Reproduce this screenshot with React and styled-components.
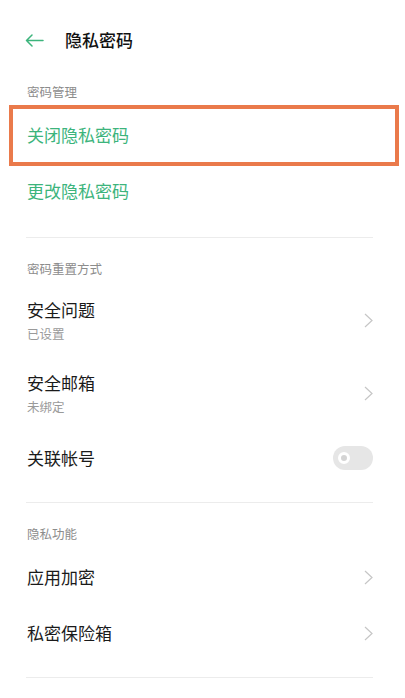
import styled, { createGlobalStyle } from 'styled-components'

const GlobalStyle = createGlobalStyle`
  html, body {
    margin: 0;
    padding: 0;
    background: #fff;
  }
  body {
    font-family: 'Noto Sans CJK SC', 'Noto Sans', sans-serif;
    -webkit-font-smoothing: antialiased;
  }
`

const GREEN = '#3cb47c'

const Page = styled.div`
  width: 405px;
  min-height: 698px;
  background: #fff;
`

const Header = styled.header`
  box-sizing: border-box;
  height: 61px;
  padding: 19px 0 0 25px;
  display: flex;
  align-items: center;
  gap: 21px;
`

const BackButton = styled.button`
  border: none;
  background: none;
  padding: 0;
  display: flex;
  align-items: center;
  cursor: pointer;
`

const Title = styled.h1`
  margin: 0;
  font-size: 17px;
  font-weight: 500;
  color: #111;
  line-height: 24px;
`

const SectionTitle = styled.div`
  box-sizing: border-box;
  height: 46px;
  padding: 18px 27px 0;
  font-size: 12.5px;
  line-height: 26px;
  color: #8c8c8c;
`

const Row = styled.div`
  position: relative;
  box-sizing: border-box;
  height: ${(p) => (p.$tall ? 73 : 56)}px;
  padding: 0 32px 0 27px;
  display: flex;
  align-items: center;
  justify-content: space-between;

  ${(p) =>
    p.$marked &&
    `
    &::after {
      content: '';
      position: absolute;
      top: -2px;
      bottom: -3px;
      left: 9px;
      right: 6px;
      border: 4px solid #ea7a4b;
      pointer-events: none;
    }
  `}
`

const Texts = styled.div`
  display: flex;
  flex-direction: column;
  gap: 2px;
`

const Label = styled.span`
  font-size: 17px;
  line-height: 24px;
  color: ${(p) => (p.$action ? GREEN : '#1a1a1a')};
`

const Sub = styled.span`
  font-size: 12.5px;
  line-height: 20px;
  color: #9a9a9a;
`

const Divider = styled.hr`
  margin: ${(p) => p.$gap || 16}px 32px 0 26px;
  border: none;
  border-top: 1px solid #ececec;
`

const Toggle = styled.div`
  box-sizing: border-box;
  width: 40px;
  height: 24px;
  border-radius: 12px;
  background: #e6e6e6;
  display: flex;
  align-items: center;
  padding-left: 5px;
`

const Knob = styled.span`
  box-sizing: border-box;
  width: 12px;
  height: 12px;
  border-radius: 50%;
  background: #d4d4d4;
  border: 3px solid #fff;
`

function BackArrow() {
  return (
    <svg width="19" height="13" viewBox="0 0 19 13" fill="none">
      <path
        d="M18 6.5H1.5M7 1L1.5 6.5 7 12"
        stroke={GREEN}
        strokeWidth="1.5"
        strokeLinecap="round"
        strokeLinejoin="round"
      />
    </svg>
  )
}

function Chevron() {
  return (
    <svg width="9" height="15" viewBox="0 0 9 15" fill="none">
      <path d="M1 1l7 6.5L1 14" stroke="#c6c6c6" strokeWidth="1.2" />
    </svg>
  )
}

function App() {
  return (
    <Page>
      <GlobalStyle />
      <Header>
        <BackButton aria-label="返回">
          <BackArrow />
        </BackButton>
        <Title>隐私密码</Title>
      </Header>

      <SectionTitle>密码管理</SectionTitle>
      <Row $marked>
        <Label $action>关闭隐私密码</Label>
      </Row>
      <Row>
        <Label $action>更改隐私密码</Label>
      </Row>
      <Divider $gap={18} />

      <SectionTitle>密码重置方式</SectionTitle>
      <Row $tall>
        <Texts>
          <Label>安全问题</Label>
          <Sub>已设置</Sub>
        </Texts>
        <Chevron />
      </Row>
      <Row $tall>
        <Texts>
          <Label>安全邮箱</Label>
          <Sub>未绑定</Sub>
        </Texts>
        <Chevron />
      </Row>
      <Row>
        <Label>关联帐号</Label>
        <Toggle>
          <Knob />
        </Toggle>
      </Row>
      <Divider />

      <SectionTitle>隐私功能</SectionTitle>
      <Row>
        <Label>应用加密</Label>
        <Chevron />
      </Row>
      <Row>
        <Label>私密保险箱</Label>
        <Chevron />
      </Row>
      <Divider />
    </Page>
  )
}

export default App
